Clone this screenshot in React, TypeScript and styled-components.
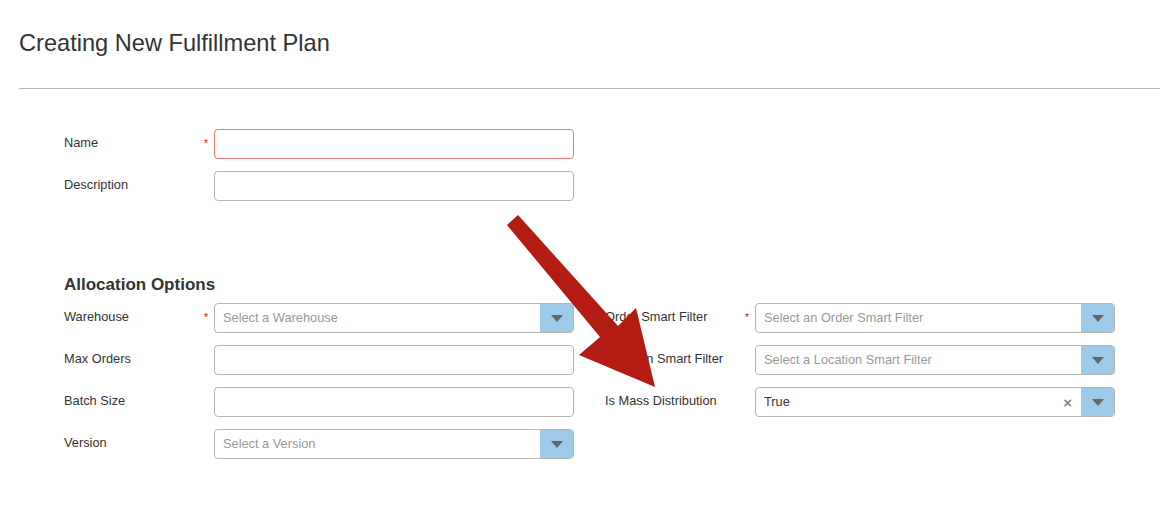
import React from 'react'
import styled, { createGlobalStyle } from 'styled-components'

const GlobalStyle = createGlobalStyle`
  html, body {
    margin: 0;
    padding: 0;
    background: #fff;
  }
  body {
    font-family: "Liberation Sans", Arial, Helvetica, sans-serif;
    color: #333;
  }
`

type SelectProps = {
  placeholder?: string
  value?: string
  clearable?: boolean
}

function SelectBox({ placeholder, value, clearable }: SelectProps) {
  return (
    <StSelect>
      <StSelectValue $placeholder={!value}>{value || placeholder}</StSelectValue>
      {clearable && <StClear>×</StClear>}
      <StSelectButton>
        <StCaret />
      </StSelectButton>
    </StSelect>
  )
}

type FieldProps = {
  label: string
  required?: boolean
  invalid?: boolean
  children?: React.ReactNode
}

function Field({ label, required, invalid, children }: FieldProps) {
  return (
    <StField>
      <StLabel>
        <span>{label}</span>
        {required && <StRequired>*</StRequired>}
      </StLabel>
      {children || <StInput $invalid={invalid} />}
    </StField>
  )
}

function Arrow() {
  // big red annotation arrow painted over the form
  return (
    <StArrow width="170" height="190" viewBox="500 205 170 190">
      <polygon
        points="518,215 618,326 636,308 655,387 579,355 600,337 507,225"
        fill="#b21c12"
      />
    </StArrow>
  )
}

export default function App() {
  return (
    <StPage>
      <GlobalStyle />
      <StHeader>
        <StTitle>Creating New Fulfillment Plan</StTitle>
      </StHeader>
      <StForm>
        <StColumn>
          <Field label="Name" required invalid />
          <Field label="Description" />
        </StColumn>

        <StSectionTitle>Allocation Options</StSectionTitle>
        <StColumns>
          <StColumn>
            <Field label="Warehouse" required>
              <SelectBox placeholder="Select a Warehouse" />
            </Field>
            <Field label="Max Orders" />
            <Field label="Batch Size" />
            <Field label="Version">
              <SelectBox placeholder="Select a Version" />
            </Field>
          </StColumn>
          <StColumn>
            <Field label="Order Smart Filter" required>
              <SelectBox placeholder="Select an Order Smart Filter" />
            </Field>
            <Field label="Location Smart Filter">
              <SelectBox placeholder="Select a Location Smart Filter" />
            </Field>
            <Field label="Is Mass Distribution">
              <SelectBox value="True" clearable />
            </Field>
          </StColumn>
        </StColumns>
      </StForm>
      <Arrow />
    </StPage>
  )
}

const StPage = styled.div`
  position: relative;
  width: 1170px;
  height: 505px;
  overflow: hidden;
`
const StHeader = styled.div`
  margin: 0 10px 0 19px;
  padding: 29px 0 31px;
  border-bottom: 1px solid #b4b4b4;
`
const StTitle = styled.h1`
  margin: 0;
  font-size: 23.6px;
  line-height: 28px;
  font-weight: normal;
  color: #333;
`
const StForm = styled.div`
  padding: 40px 0 0 64px;
`
const StColumns = styled.div`
  display: flex;
  gap: 31px;
`
const StColumn = styled.div`
  display: flex;
  flex-direction: column;
  gap: 12px;
`
const StSectionTitle = styled.h2`
  margin: 74px 0 8px;
  font-size: 17px;
  line-height: 20px;
  font-weight: bold;
  color: #333;
`
const StField = styled.div`
  display: flex;
  align-items: center;
  width: 510px;
  height: 30px;
`
const StLabel = styled.label`
  display: flex;
  align-items: center;
  justify-content: space-between;
  flex: 0 0 150px;
  box-sizing: border-box;
  padding-right: 6px;
  font-size: 12.8px;
  color: #333;
  margin-top: -3px;
`
const StRequired = styled.span`
  color: #e00;
  font-size: 10px;
  margin-top: 2px;
`
const StInput = styled.div<{ $invalid?: boolean }>`
  flex: 0 0 360px;
  height: 30px;
  box-sizing: border-box;
  border: 1px solid ${(p) => (p.$invalid ? '#f27579' : '#b5b5b5')};
  border-radius: 4px;
  background: #fff;
`
const StSelect = styled.div`
  flex: 0 0 360px;
  height: 30px;
  box-sizing: border-box;
  display: flex;
  align-items: stretch;
  border: 1px solid #b5b5b5;
  border-radius: 4px;
  overflow: hidden;
  background: #fff;
`
const StSelectValue = styled.div<{ $placeholder?: boolean }>`
  flex: 1;
  display: flex;
  align-items: center;
  padding-left: 8px;
  margin-top: -1px;
  font-size: 12.8px;
  color: ${(p) => (p.$placeholder ? '#999' : '#333')};
`
const StClear = styled.div`
  display: flex;
  align-items: center;
  padding-right: 9px;
  font-size: 15px;
  font-weight: bold;
  color: #888;
`
const StSelectButton = styled.div`
  flex: 0 0 33px;
  display: flex;
  align-items: center;
  justify-content: center;
  background: #9dcae9;
`
const StCaret = styled.span`
  width: 0;
  height: 0;
  border-left: 6px solid transparent;
  border-right: 6px solid transparent;
  border-top: 7px solid #666;
  margin-top: 1px;
`
const StArrow = styled.svg`
  position: absolute;
  left: 500px;
  top: 205px;
  pointer-events: none;
`
